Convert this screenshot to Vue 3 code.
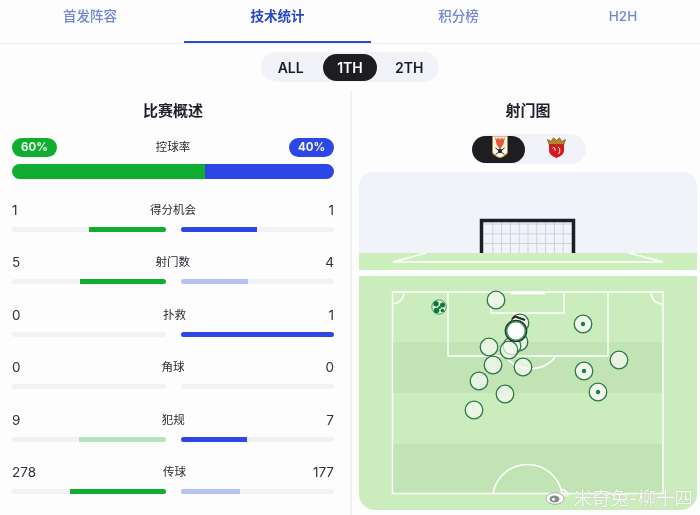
<script setup>
const tabs = [
  { label: '首发阵容', w: 184, cls: 'first' },
  { label: '技术统计', w: 187, active: true },
  { label: '积分榜', w: 175 },
  { label: 'H2H', w: 154 },
]
const periods = ['ALL', '1TH', '2TH']
const stats = [
  { name: '得分机会', l: 1, r: 1, lw: 50, rw: 50, lc: 'green', rc: 'blue' },
  { name: '射门数', l: 5, r: 4, lw: 56, rw: 44, lc: 'green', rc: 'blue-soft' },
  { name: '扑救', l: 0, r: 1, lw: 0, rw: 100, lc: 'green', rc: 'blue' },
  { name: '角球', l: 0, r: 0, lw: 0, rw: 0, lc: 'green', rc: 'blue' },
  { name: '犯规', l: 9, r: 7, lw: 56.5, rw: 43.5, lc: 'green-soft', rc: 'blue' },
  { name: '传球', l: 278, r: 177, lw: 62, rw: 39, lc: 'green', rc: 'blue-soft' },
]
const netX = Array.from({ length: 9 }, (_, i) => 484 + (i + 1) * 8.8)
const netY = Array.from({ length: 3 }, (_, i) => 224 + i * 9.8)
const shots = [
  [496, 300], [520, 323], [519, 342], [512, 346], [509, 350], [489, 347], [493, 365],
  [523, 367], [479, 381], [505, 394], [474, 410], [619, 360],
]
const onTarget = [[583, 324], [584, 371], [598, 392]]
</script>

<template>
  <div class="page">
    <nav class="tabs">
      <div
        v-for="t in tabs"
        :key="t.label"
        class="tab"
        :class="[t.cls, { active: t.active }]"
        :style="{ width: t.w + 'px' }"
      >{{ t.label }}</div>
    </nav>

    <div class="seg-wrap">
      <div class="seg">
        <span v-for="p in periods" :key="p" class="seg-item" :class="{ on: p === '1TH' }">{{ p }}</span>
      </div>
    </div>

    <main class="panels">
      <section class="left">
        <h2 class="title">比赛概述</h2>
        <div class="poss-head">
          <span class="pill green">60%</span>
          <span class="label">控球率</span>
          <span class="pill blue">40%</span>
        </div>
        <div class="poss-bar">
          <div class="poss-l"></div>
          <div class="poss-r"></div>
        </div>
        <div class="rows">
          <div v-for="s in stats" :key="s.name" class="row">
            <div class="row-head">
              <span class="num">{{ s.l }}</span>
              <span class="label">{{ s.name }}</span>
              <span class="num">{{ s.r }}</span>
            </div>
            <div class="tracks">
              <div class="track end"><div class="fill" :class="s.lc" :style="{ width: s.lw + '%' }"></div></div>
              <div class="track"><div class="fill" :class="s.rc" :style="{ width: s.rw + '%' }"></div></div>
            </div>
          </div>
        </div>
      </section>

      <section class="right">
        <h2 class="title">射门图</h2>
        <div class="team-wrap">
          <div class="team-toggle">
            <div class="team on">
              <svg width="16" height="22" viewBox="0 0 16 22">
                <path d="M.5 0H15.500V16Q15.500 19 8 22Q.5 19 .5 16Z" fill="#f8f4e6" stroke="#a98d3c" stroke-width="1" />
                <path d="M3 1L4.500 8L8 13.500L11.500 8L13 1L11 3.500L10 1L8.800 4L8 1L7.200 4L6 1L5 3.500Z" fill="#e4573a" />
                <circle cx="8" cy="15" r="2.200" fill="#2a2a2a" />
                <path d="M3.500 12L12.500 18.500M12.500 12L3.500 18.500" stroke="#2a2a2a" stroke-width="1" />
              </svg>
            </div>
            <div class="team">
              <svg width="19" height="22" viewBox="0 0 19 22">
                <path d="M2 8H17V14.500Q17 19 9.500 22Q2 19 2 14.500Z" fill="#d9161d" />
                <path d="M.5 3.500L4 5.500L6.500 1.800L9.500 4.500L12.500 1.800L15 5.500L18.500 3.500L16.800 8.500H2.200Z" fill="#b9852a" stroke="#5a3a12" stroke-width=".6" />
                <path d="M5.500 12Q8.500 10.500 8 15M11 11Q14.500 13.500 11.500 18" stroke="#fff" stroke-width="1" fill="none" />
              </svg>
            </div>
          </div>
        </div>

        <div class="map">
          <svg class="sky" viewBox="359 172 338 98" width="338" height="98">
            <rect x="359" y="172" width="338" height="81" fill="#f0f3f9" />
            <g stroke="#cdd1dc" stroke-width="1">
              <line v-for="x in netX" :key="x" :x1="x" y1="221" :x2="x" y2="253" />
              <line v-for="y in netY" :key="y" x1="483" :y1="y" x2="573" :y2="y" />
            </g>
            <path d="M481.500 253V220.500H573.500V253" fill="none" stroke="#1c1c2a" stroke-width="3.500" />
            <rect x="359" y="253" width="338" height="17" fill="#cdeebd" />
            <path d="M426 253L393 262H663L629 253" fill="none" stroke="#fff" stroke-width="1.500" />
          </svg>

          <svg class="pitch" viewBox="359 276 338 234" width="338" height="234">
            <rect x="359" y="276" width="338" height="234" fill="#cbedbd" />
            <rect x="393" y="342" width="270" height="51" fill="#c2e3b4" />
            <rect x="393" y="444" width="270" height="49" fill="#c2e3b4" />
            <g fill="none" stroke="#fff" stroke-width="1.500">
              <path d="M392.500 493.500V292H663V493.500H392.500Z" />
              <path d="M448 292V356H608V292" />
              <path d="M491 292V313H564V292" />
              <path d="M505 356A32 32 0 0 0 556 356" />
              <path d="M392.500 304A12 12 0 0 0 404 292M663 304A12 12 0 0 1 651 292" />
              <path d="M493 493.500A35 35 0 0 1 562 493.500" />
              <path d="M510 293H545" stroke-width="2.500" />
            </g>
            <g fill="#f6f9f3" fill-opacity=".72" stroke="#2c7a48" stroke-width="1.300">
              <circle v-for="s in shots" :key="s.join()" :cx="s[0]" :cy="s[1]" r="8.800" />
              <circle v-for="s in onTarget" :key="s.join()" :cx="s[0]" :cy="s[1]" r="8.800" fill-opacity=".9" />
            </g>
            <g fill="#1d8145">
              <circle v-for="s in onTarget" :key="s.join()" :cx="s[0]" :cy="s[1]" r="2.200" />
            </g>
            <path d="M512 319L515 316.500L525 320" fill="none" stroke="#2a2a2a" stroke-width="2" />
            <circle cx="516" cy="331" r="9.500" fill="#fff" stroke="#4f9a69" stroke-width="2" />
            <circle cx="516" cy="331" r="10.700" fill="none" stroke="#1e3a2a" stroke-width="1.300" />
            <circle cx="439" cy="307" r="7.200" fill="#dff0da" stroke="#4d9c68" stroke-width="1" />
            <g fill="#0f7a35">
              <circle cx="436" cy="303.800" r="2.700" />
              <circle cx="442.500" cy="305" r="2.500" />
              <circle cx="436.500" cy="310.500" r="2.800" />
              <circle cx="442.500" cy="310.500" r="1.800" />
              <circle cx="439.500" cy="307.500" r="1.500" />
            </g>
          </svg>
        </div>
      </section>
    </main>

    <div class="mark">
      <svg class="mark-icon" width="25" height="17" viewBox="0 0 25 17">
        <ellipse cx="10" cy="10.500" rx="9" ry="5.800" fill="#fff" stroke="#a5b0a2" stroke-width="1" />
        <ellipse cx="9.500" cy="11" rx="5" ry="3.600" fill="#858b82" />
        <circle cx="8.500" cy="11.300" r="1.500" fill="#fff" />
        <path d="M15 1.500A7 7 0 0 1 23 8.500M16 5A3.500 3.500 0 0 1 20 8.500" fill="none" stroke="#fff" stroke-width="1.600" />
      </svg>
      <span>米奇兔-柳十四</span>
    </div>
  </div>
</template>

<style scoped>
.page {
  position: relative;
  width: 700px;
  height: 515px;
  overflow: hidden;
  background: #fdfdfe;
  color: #20202c;
  font-family: Inter, "Noto Sans CJK SC", sans-serif;
  filter: blur(0.35px);
}
.tabs {
  display: flex;
  height: 44px;
  box-sizing: border-box;
  border-bottom: 1px solid #e8ecf3;
}
.tab {
  height: 43px;
  box-sizing: border-box;
  padding-top: 6px;
  text-align: center;
  font-size: 13.500px;
  line-height: 20px;
  font-weight: 500;
  color: #7285d6;
}
.tab.first { padding-right: 4px; }
.tab.active {
  color: #2b46c6;
  font-weight: 700;
  border-bottom: 2.500px solid #2b4bc8;
}
.seg-wrap {
  display: flex;
  justify-content: center;
  margin-top: 8px;
}
.seg {
  display: flex;
  align-items: center;
  justify-content: center;
  width: 178px;
  height: 30px;
  border-radius: 15px;
  background: #f1f3f8;
}
.seg-item {
  width: 55px;
  height: 27px;
  margin: 0 2.500px;
  border-radius: 14px;
  font-size: 14px;
  font-weight: 600;
  line-height: 27px;
  text-align: center;
  color: #1c1c24;
}
.seg-item.on {
  background: #1d1d22;
  color: #fff;
}
.panels {
  display: flex;
  margin-top: 8px;
}
.left {
  width: 322px;
  height: 425px;
  padding: 0 16px 0 12px;
  border-right: 2px solid #eff2f7;
  margin-right: 7px;
}
.title {
  margin: 10px 0 0;
  font-size: 15px;
  line-height: 22px;
  font-weight: 700;
  text-align: center;
  color: #20202c;
}
.poss-head {
  display: flex;
  align-items: center;
  justify-content: space-between;
  height: 19px;
  margin-top: 16px;
}
.pill {
  width: 45px;
  height: 19px;
  border-radius: 10px;
  font-size: 11.500px;
  font-weight: 700;
  line-height: 19px;
  text-align: center;
  color: #eef5ee;
}
.pill.green { background: #0fae31; }
.pill.blue { background: #2c47e6; }
.label {
  font-size: 11.500px;
  line-height: 21px;
  color: #2a2a34;
}
.poss-bar {
  display: flex;
  height: 15px;
  margin-top: 7px;
  border-radius: 8px;
  overflow: hidden;
}
.poss-l { width: 60%; background: #0fae31; }
.poss-r { width: 40%; background: #2c47e6; }
.rows {
  display: flex;
  flex-direction: column;
  gap: 20.400px;
  margin-top: 21px;
}
.row-head {
  display: flex;
  justify-content: space-between;
  height: 20px;
  line-height: 20px;
}
.num {
  font-size: 13.500px;
  color: #30303c;
}
.tracks {
  display: flex;
  gap: 15px;
  margin-top: 7px;
}
.track {
  display: flex;
  flex: 1;
  height: 5px;
  border-radius: 3px;
  background: #f0f2f5;
  overflow: hidden;
}
.track.end { justify-content: flex-end; }
.fill.green { background: #0fae31; }
.fill.green-soft { background: #b5e3c0; }
.fill.blue { background: #2c47e6; }
.fill.blue-soft { background: #b6c3f2; }
.right {
  width: 338px;
}
.team-wrap {
  display: flex;
  justify-content: center;
  margin-top: 12px;
  padding-left: 2px;
}
.team-toggle {
  display: flex;
  align-items: center;
  width: 114px;
  height: 30px;
  border-radius: 15px;
  background: #f1f3f8;
}
.team {
  display: flex;
  align-items: center;
  justify-content: center;
  width: 53px;
  height: 27px;
  box-sizing: border-box;
  border-radius: 14px;
}
.team svg { margin-top: -5px; }
.team.on { padding-left: 3px; background: #1d1d22; }
.team + .team {
  width: 61px;
  padding-left: 2px;
}
.map {
  display: flex;
  flex-direction: column;
  gap: 6px;
  margin-top: 8px;
}
.sky {
  display: block;
  border-radius: 14px 14px 0 0;
}
.pitch {
  display: block;
  border-radius: 0 0 16px 16px;
}
.mark {
  position: absolute;
  right: 7px;
  bottom: 6px;
  display: flex;
  align-items: center;
  gap: 3px;
  font-size: 18.500px;
  line-height: 22px;
  color: #fbfdf8;
  text-shadow: 0 0 1px #8f9c8c;
}
.mark-icon { margin-top: -3px; }
</style>
